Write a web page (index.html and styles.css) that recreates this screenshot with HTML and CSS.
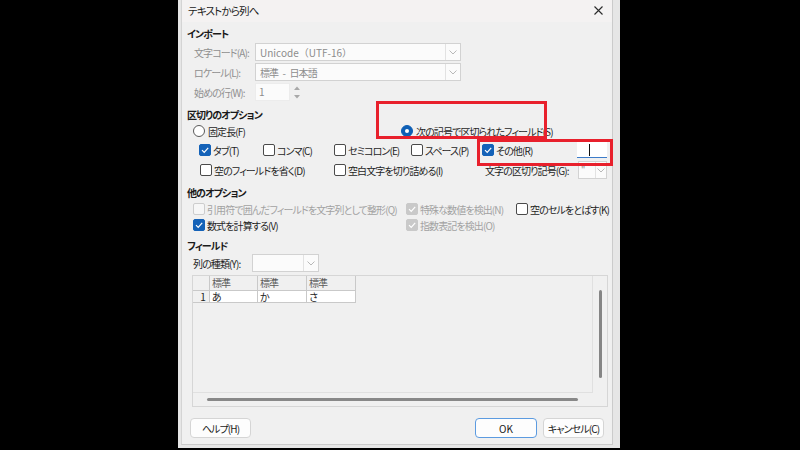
FILE: index.html
```html
<!DOCTYPE html>
<html lang="ja">
<head>
<meta charset="utf-8">
<title>テキストから列へ</title>
<link rel="stylesheet" href="styles.css">
</head>
<body>
<div class="frame">
  <div class="dialog">
    <div class="titlebar">
      <span class="title">テキストから列へ</span>
      <svg class="close" width="9" height="9" viewBox="0 0 9 9"><path d="M0.5 0.5 L8.5 8.5 M8.5 0.5 L0.5 8.5" stroke="#2b2b2b" stroke-width="1.1" fill="none"/></svg>
    </div>

    <div class="heading">インポート</div>
    <div class="frow">
      <span class="flabel">文字コード(A):</span>
      <div class="combo wide"><span class="ctext lat">Unicode（UTF-16）</span><span class="cbtn"><svg width="8" height="5" viewBox="0 0 8 5"><path d="M0.5 0.5 L4 4 L7.5 0.5" stroke="#b8b8b8" fill="none"/></svg></span></div>
    </div>
    <div class="frow">
      <span class="flabel">ロケール(L):</span>
      <div class="combo wide"><span class="ctext spaced">標準 - 日本語</span><span class="cbtn"><svg width="8" height="5" viewBox="0 0 8 5"><path d="M0.5 0.5 L4 4 L7.5 0.5" stroke="#b8b8b8" fill="none"/></svg></span></div>
    </div>
    <div class="frow">
      <span class="flabel">始めの行(W):</span>
      <div class="spin">
        <div class="spin-input lat">1</div>
        <div class="spin-btns">
          <svg width="6" height="4" viewBox="0 0 6 4"><path d="M0 4 L3 0.5 L6 4 Z" fill="#a8a8a8"/></svg>
          <svg width="6" height="4" viewBox="0 0 6 4"><path d="M0 0 L3 3.5 L6 0 Z" fill="#a8a8a8"/></svg>
        </div>
      </div>
    </div>

    <div class="heading h2">区切りのオプション</div>
    <div class="rrow">
      <label class="opt w-fixed"><span class="radio"></span>固定長(F)</label>
      <label class="opt"><span class="radio on"></span>次の記号で区切られたフィールド(S)</label>
    </div>
    <div class="crow1">
      <label class="opt w-tab"><span class="cb on"><svg width="10" height="10" viewBox="0 0 10 10"><path d="M2 5.2 L4.2 7.4 L8.2 2.8" stroke="#fff" stroke-width="1.2" fill="none"/></svg></span>タブ(T)</label>
      <label class="opt w-comma"><span class="cb"></span>コンマ(C)</label>
      <label class="opt w-semi"><span class="cb"></span>セミコロン(E)</label>
      <label class="opt w-space"><span class="cb"></span>スペース(P)</label>
      <label class="opt w-other"><span class="cb on"><svg width="10" height="10" viewBox="0 0 10 10"><path d="M2 5.2 L4.2 7.4 L8.2 2.8" stroke="#fff" stroke-width="1.2" fill="none"/></svg></span>その他(R)</label>
      <div class="tinput"><span class="caret"></span></div>
    </div>
    <div class="crow2">
      <label class="opt w-empty"><span class="cb"></span>空のフィールドを省く(D)</label>
      <label class="opt w-trim"><span class="cb"></span>空白文字を切り詰める(I)</label>
      <span class="qlabel">文字の区切り記号(G):</span>
      <div class="combo small"><span class="ctext q">"</span><span class="cbtn sm"><svg width="8" height="5" viewBox="0 0 8 5"><path d="M0.5 0.5 L4 4 L7.5 0.5" stroke="#b8b8b8" fill="none"/></svg></span></div>
    </div>

    <div class="heading h3">他のオプション</div>
    <div class="orow1">
      <label class="opt w-quote dis"><span class="cb dis"></span>引用符で囲んだフィールドを文字列として整形(Q)</label>
      <label class="opt w-special dis"><span class="cb dison"><svg width="10" height="10" viewBox="0 0 10 10"><path d="M2 5.2 L4.2 7.4 L8.2 2.8" stroke="#fff" stroke-width="1.2" fill="none"/></svg></span>特殊な数値を検出(N)</label>
      <label class="opt"><span class="cb"></span>空のセルをとばす(K)</label>
    </div>
    <div class="orow2">
      <label class="opt w-quote"><span class="cb on"><svg width="10" height="10" viewBox="0 0 10 10"><path d="M2 5.2 L4.2 7.4 L8.2 2.8" stroke="#fff" stroke-width="1.2" fill="none"/></svg></span>数式を計算する(V)</label>
      <label class="opt dis"><span class="cb dison"><svg width="10" height="10" viewBox="0 0 10 10"><path d="M2 5.2 L4.2 7.4 L8.2 2.8" stroke="#fff" stroke-width="1.2" fill="none"/></svg></span>指数表記を検出(O)</label>
    </div>

    <div class="heading h4">フィールド</div>
    <div class="typerow">
      <span class="tlabel">列の種類(Y):</span>
      <div class="combo type"><span class="ctext"></span><span class="cbtn"><svg width="8" height="5" viewBox="0 0 8 5"><path d="M0.5 0.5 L4 4 L7.5 0.5" stroke="#b8b8b8" fill="none"/></svg></span></div>
    </div>

    <div class="grid">
      <div class="view">
        <div class="trow thead">
          <div class="cell corner"></div>
          <div class="cell c1">標準</div>
          <div class="cell c2">標準</div>
          <div class="cell c3">標準</div>
        </div>
        <div class="trow tbody">
          <div class="cell corner num">1</div>
          <div class="cell c1">あ</div>
          <div class="cell c2">か</div>
          <div class="cell c3">さ</div>
        </div>
      </div>
      <div class="vscroll"><div class="vthumb"></div></div>
      <div class="hscroll"><div class="hthumb"></div></div>
      <div class="sc-corner"></div>
    </div>

    <div class="brow">
      <div class="btn help">ヘルプ(H)</div>
      <div class="spacer"></div>
      <div class="btn ok lat">OK</div>
      <div class="btn cancel">キャンセル(C)</div>
    </div>
  </div>
</div>

<div class="mark m1"></div>
<div class="mark m2"></div>
</body>
</html>
```

FILE: styles.css
```css
* { box-sizing: border-box; }
html, body { margin: 0; padding: 0; }
body {
  width: 800px;
  height: 450px;
  background: #000;
  overflow: hidden;
  position: relative;
  font-family: "Noto Sans CJK JP", "Noto Sans", sans-serif;
  font-size: 10px;
  letter-spacing: -0.9px;
  font-feature-settings: "palt";
  color: #1f1f1f;
}
.lat { letter-spacing: 0; font-feature-settings: normal; }
.spaced { word-spacing: 3px; }

.frame {
  margin-left: 178px;
  width: 442px;
  height: 448px;
  background: #e6e6e6;
  padding-left: 3px;
}
.dialog {
  width: 432px;
  height: 445px;
  background: #f0f0f0;
  border-right: 1px solid #cbcbcb;
  border-bottom: 1px solid #cbcbcb;
  border-left: 1px solid #d4d4d4;
}

.titlebar {
  height: 22px;
  background: #f4f2f2;
  display: flex;
  align-items: center;
  justify-content: space-between;
  padding: 0 9px 2px 6px;
}
.title { color: #1a1a1a; font-size: 10.5px; letter-spacing: -0.8px; }

.heading {
  height: 20px;
  padding: 2px 0 0 5px;
  display: flex;
  align-items: center;
  font-weight: bold;
  color: #1a1a1a;
}
.heading.h2 { height: 22px; }
.heading.h3 { height: 22px; padding-top: 6px; }
.heading.h4 { height: 24px; }

.frow {
  height: 20px;
  display: flex;
  align-items: center;
  padding-left: 12px;
}
.flabel { width: 61px; color: #8f8f8f; white-space: nowrap; }

.combo {
  height: 18px;
  background: #fbfbfb;
  border: 1px solid #d2d2d2;
  display: flex;
  align-items: center;
}
.combo.wide { width: 206px; }
.combo.small { width: 29px; }
.combo.type { width: 67px; }
.ctext { flex: 1; padding-left: 4px; color: #8c8c8c; white-space: nowrap; overflow: hidden; }
.ctext.q { padding-left: 2px; font-size: 9px; }
.cbtn {
  width: 15px;
  height: 100%;
  border-left: 1px solid #e2e2e2;
  display: flex;
  align-items: center;
  justify-content: center;
}
.cbtn.sm { width: 11px; }

.spin { display: flex; align-items: center; height: 18px; }
.spin-input {
  width: 35px;
  height: 18px;
  background: #fbfbfb;
  border: 1px solid #ececec;
  color: #8c8c8c;
  padding-left: 3px;
  line-height: 16px;
}
.spin-btns {
  width: 13px;
  height: 13px;
  display: flex;
  flex-direction: column;
  align-items: center;
  justify-content: space-between;
}
.spin-btns svg { display: block; }

.opt { display: flex; align-items: center; white-space: nowrap; }
.opt.dis { color: #a2a2a2; }

.radio {
  width: 12px;
  height: 12px;
  border-radius: 50%;
  border: 1px solid #5a5a5a;
  background: #fff;
  margin-right: 3px;
  flex: none;
}
.radio.on {
  background: #0e5fb5;
  border-color: #0e5fb5;
  display: flex;
  align-items: center;
  justify-content: center;
}
.radio.on::after {
  content: "";
  width: 4px;
  height: 4px;
  border-radius: 50%;
  background: #fff;
}

.cb {
  width: 12px;
  height: 12px;
  border: 1px solid #4a4a4a;
  border-radius: 2px;
  background: #fff;
  margin-right: 2px;
  flex: none;
  display: flex;
  align-items: center;
  justify-content: center;
}
.cb svg { display: block; }
.cb.on { background: #1462b8; border-color: #1462b8; }
.cb.dis { border-color: #cdcdcd; background: #f6f6f6; }
.cb.dison { background: #c9c9c9; border-color: #c9c9c9; }

.rrow { height: 14px; display: flex; align-items: center; padding-left: 11px; }
.w-fixed { width: 208px; }

.crow1 { height: 24px; display: flex; align-items: center; padding-left: 17px; }
.w-tab { width: 64px; }
.w-comma { width: 71px; }
.w-semi { width: 77px; }
.w-space { width: 71px; }
.w-other { width: 95px; }
.tinput {
  width: 30px;
  height: 16px;
  background: #fff;
  border-bottom: 1px solid #3d7cc9;
}
.caret { display: block; width: 1px; height: 12px; margin: 2px 0 0 12px; background: #111; }

.crow2 { height: 16px; display: flex; align-items: center; padding-left: 18px; }
.w-empty { width: 134px; }
.w-trim { width: 151px; }
.qlabel { width: 93px; white-space: nowrap; }

.orow1 { height: 18px; display: flex; align-items: center; padding-left: 11px; }
.orow2 { height: 14px; display: flex; align-items: center; padding-left: 11px; }
.w-quote { width: 213px; }
.w-special { width: 110px; }

.typerow { height: 14px; display: flex; align-items: center; padding-left: 11px; }
.tlabel { width: 59px; white-space: nowrap; }

.grid {
  margin: 5px 0 0 10px;
  width: 416px;
  height: 132px;
  border: 1px solid #d6d6d6;
  display: grid;
  grid-template-columns: 1fr 14px;
  grid-template-rows: 1fr 13px;
}
.view {
  border-right: 1px solid #e0e0e0;
  border-bottom: 1px solid #e0e0e0;
  overflow: hidden;
}
.trow { display: flex; }
.cell {
  border-right: 1px solid #c9c9c9;
  border-bottom: 1px solid #c9c9c9;
  padding-left: 2px;
  white-space: nowrap;
}
.thead .cell { height: 15px; line-height: 14px; color: #5a5a5a; }
.tbody .cell { height: 12px; line-height: 11px; background: #fff; color: #222; }
.tbody .cell.num { background: #f0f0f0; text-align: right; padding-right: 4px; }
.corner { width: 17px; }
.c1 { width: 48px; }
.c2 { width: 49px; }
.c3 { width: 49px; }

.vscroll { display: flex; justify-content: center; }
.vthumb { width: 3px; height: 88px; margin-top: 14px; background: #858585; border-radius: 2px; }
.hscroll { padding: 5px 0 0 14px; }
.hthumb { width: 371px; height: 3px; background: #888; border-radius: 2px; }

.brow {
  margin-top: 11px;
  height: 20px;
  display: flex;
  padding: 0 8px 0 8px;
}
.btn {
  height: 20px;
  background: #fdfdfd;
  border: 1px solid #d5d5d5;
  border-radius: 4px;
  display: flex;
  align-items: center;
  justify-content: center;
  color: #1a1a1a;
  white-space: nowrap;
}
.help { width: 61px; }
.spacer { flex: 1; }
.ok { width: 62px; border-color: #5c9be0; margin-right: 6px; }
.cancel { width: 61px; }

.mark { position: absolute; border: 3px solid #e8202c; }
.m1 { left: 376px; top: 101px; width: 171px; height: 38px; }
.m2 { left: 477px; top: 139px; width: 136px; height: 27px; }
```
